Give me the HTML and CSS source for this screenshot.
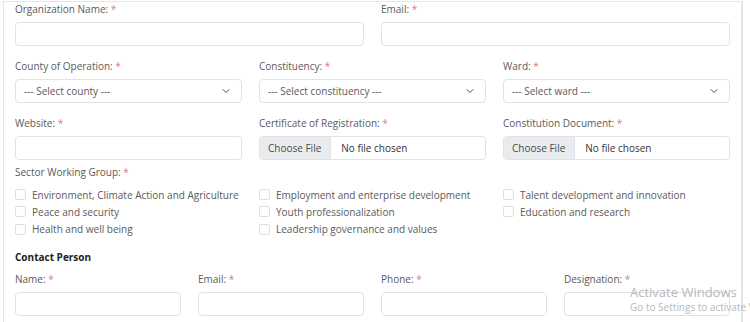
FILE: index.html
```html
<!DOCTYPE html>
<html lang="en">
<head>
<meta charset="utf-8">
<title>Organization Registration</title>
<link rel="stylesheet" href="styles.css">
</head>
<body>
<div class="card">
  <div class="row cols-2 gap-row">
    <div class="field"><label class="lbl">Organization Name: <span class="req">*</span></label><div class="ctl"></div></div>
    <div class="field"><label class="lbl">Email: <span class="req">*</span></label><div class="ctl"></div></div>
  </div>
  <div class="row cols-3 gap-row">
    <div class="field"><label class="lbl">County of Operation: <span class="req">*</span></label>
      <div class="ctl sel"><span>--- Select county ---</span><svg class="chev" viewBox="0 0 16 16" width="8" height="8"><path d="M2 5l6 6 6-6" fill="none" stroke="#4a4f55" stroke-width="2" stroke-linecap="round" stroke-linejoin="round"/></svg></div></div>
    <div class="field"><label class="lbl">Constituency: <span class="req">*</span></label>
      <div class="ctl sel"><span>--- Select constituency ---</span><svg class="chev" viewBox="0 0 16 16" width="8" height="8"><path d="M2 5l6 6 6-6" fill="none" stroke="#4a4f55" stroke-width="2" stroke-linecap="round" stroke-linejoin="round"/></svg></div></div>
    <div class="field"><label class="lbl">Ward: <span class="req">*</span></label>
      <div class="ctl sel"><span>--- Select ward ---</span><svg class="chev" viewBox="0 0 16 16" width="8" height="8"><path d="M2 5l6 6 6-6" fill="none" stroke="#4a4f55" stroke-width="2" stroke-linecap="round" stroke-linejoin="round"/></svg></div></div>
  </div>
  <div class="row cols-3 gap-row-sm">
    <div class="field"><label class="lbl">Website: <span class="req">*</span></label><div class="ctl"></div></div>
    <div class="field"><label class="lbl">Certificate of Registration: <span class="req">*</span></label>
      <div class="ctl file"><span class="fbtn">Choose File</span><span class="fname">No file chosen</span></div></div>
    <div class="field"><label class="lbl">Constitution Document: <span class="req">*</span></label>
      <div class="ctl file"><span class="fbtn">Choose File</span><span class="fname">No file chosen</span></div></div>
  </div>
  <div class="sector">
    <div class="lbl">Sector Working Group: <span class="req">*</span></div>
    <div class="row cols-3 checks">
      <div class="col">
        <label class="chk"><span class="box"></span>Environment, Climate Action and Agriculture</label>
        <label class="chk"><span class="box"></span>Peace and security</label>
        <label class="chk"><span class="box"></span>Health and well being</label>
      </div>
      <div class="col">
        <label class="chk"><span class="box"></span>Employment and enterprise development</label>
        <label class="chk"><span class="box"></span>Youth professionalization</label>
        <label class="chk"><span class="box"></span>Leadership governance and values</label>
      </div>
      <div class="col">
        <label class="chk"><span class="box"></span>Talent development and innovation</label>
        <label class="chk"><span class="box"></span>Education and research</label>
      </div>
    </div>
  </div>
  <h3 class="section">Contact Person</h3>
  <div class="row cols-4">
    <div class="field"><label class="lbl">Name: <span class="req">*</span></label><div class="ctl"></div></div>
    <div class="field"><label class="lbl">Email: <span class="req">*</span></label><div class="ctl"></div></div>
    <div class="field"><label class="lbl">Phone: <span class="req">*</span></label><div class="ctl"></div></div>
    <div class="field"><label class="lbl">Designation: <span class="req">*</span></label><div class="ctl"></div></div>
  </div>
</div>
<div class="watermark">
  <div class="wm-title">Activate Windows</div>
  <div class="wm-sub">Go to Settings to activate Windows.</div>
</div>
</body>
</html>
```

FILE: styles.css
```css
html, body {
  margin: 0;
  padding: 0;
  background: #fff;
  overflow: hidden;
}
body {
  font-family: "Open Sans", "Noto Sans", sans-serif;
  font-size: 10px;
  color: #555;
  width: 750px;
  height: 322px;
  position: relative;
}
.card {
  margin: 1px 0 0 3px;
  width: 715px;
  padding: 0 11px;
  border: 1px solid #e6e6e6;
  border-bottom: none;
  border-right: 2px solid #e4e4e4;
  height: 330px;
}
.row {
  display: grid;
  column-gap: 17px;
}
.cols-2 { grid-template-columns: repeat(2, 1fr); }
.cols-3 { grid-template-columns: repeat(3, 1fr); }
.cols-4 { grid-template-columns: repeat(4, 1fr); }
.gap-row { margin-bottom: 13px; }
.gap-row-sm { margin-bottom: 5px; }
.field { display: flex; flex-direction: column; }
.lbl {
  display: block;
  line-height: 15px;
  height: 15px;
  margin-bottom: 5px;
  color: #5a5a5a;
  white-space: nowrap;
}
.req { color: #e07a84; }
.ctl {
  height: 22px;
  border: 1px solid #dfe3e7;
  border-radius: 4px;
  background: #fff;
  box-sizing: content-box;
}
.sel {
  display: flex;
  align-items: center;
  justify-content: space-between;
  padding: 0 11px 0 8px;
  color: #5a5a5a;
}
.chev { flex: none; }
.file {
  display: flex;
  align-items: stretch;
  overflow: hidden;
}
.fbtn {
  background: #e9ecef;
  border-right: 1px solid #dfe3e7;
  padding: 0 9px 0 8px;
  display: flex;
  align-items: center;
  color: #4a4a4a;
}
.fname {
  display: flex;
  align-items: center;
  padding-left: 10px;
  color: #333;
}
.sector .lbl { margin-bottom: 6px; }
.checks .col { display: flex; flex-direction: column; }
.chk {
  display: flex;
  align-items: center;
  height: 17.3px;
  white-space: nowrap;
  color: #5a5a5a;
}
.box {
  width: 9px;
  height: 9px;
  border: 1px solid #dcdfe3;
  border-radius: 2px;
  margin-right: 6px;
  flex: none;
}
.section {
  margin: 12px 0 7px;
  font-size: 10px;
  line-height: 15px;
  font-weight: 700;
  color: #222;
}
.watermark {
  position: absolute;
  left: 630px;
  top: 284px;
  color: #b8b8b8;
  white-space: nowrap;
  font-family: "Open Sans", "Noto Sans", sans-serif;
}
.wm-title { font-size: 13px; line-height: 16px; }
.wm-sub { font-size: 10px; line-height: 14px; }
```
